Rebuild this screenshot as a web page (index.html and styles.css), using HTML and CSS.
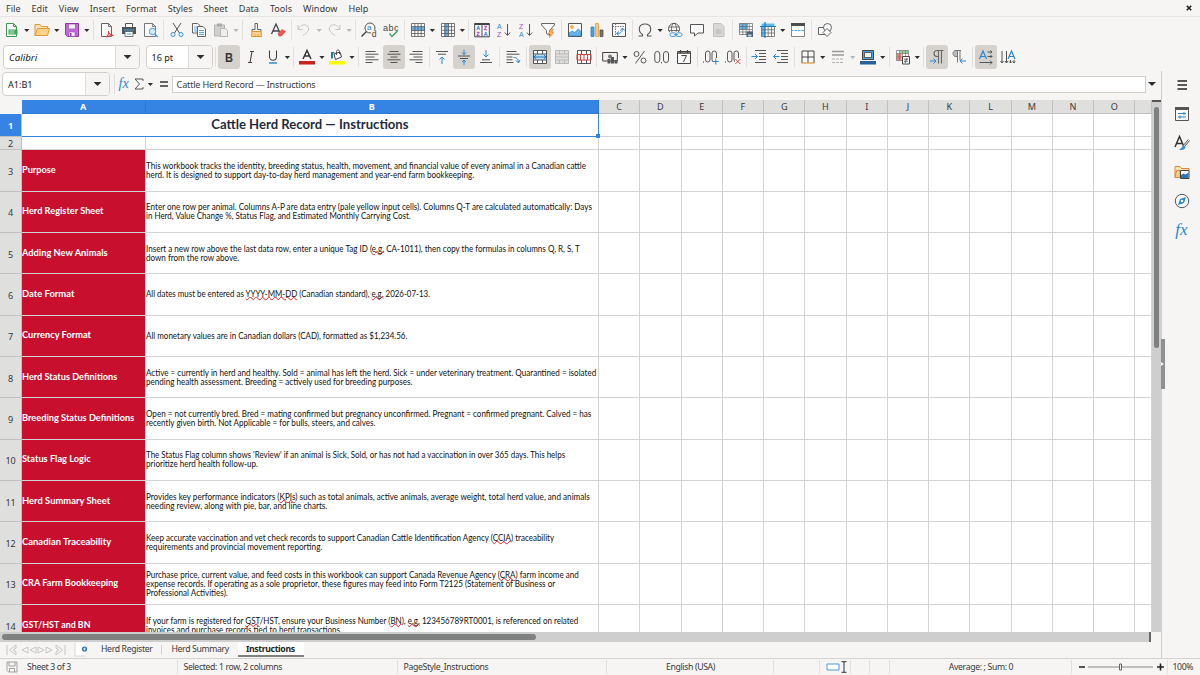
FILE: index.html
```html
<!doctype html>
<html lang="en">
  <head>
    <meta charset="UTF-8">
    <title>Cattle Herd Record</title>
    <link rel="stylesheet" href="styles.css">
  </head>
  <body>
    <header>
      <nav class="menubar">
        <span>File</span><span>Edit</span><span>View</span><span>Insert</span><span>Format</span><span>Styles</span><span>Sheet</span><span>Data</span><span>Tools</span><span>Window</span><span>Help</span>
        <svg class="close" viewBox="0 0 6 6"><path d="M.8.8l4.4 4.4M5.2.8L.8 5.2" stroke="#222" stroke-width="1.6"/></svg>
      </nav>

      <div class="toolbar">
        <b class="btn"><svg viewBox="0 0 16 16"><path d="M2.500 1.500h7l3 3v10h-10z" fill="#fff" stroke="#3a9a50"/><path d="M9.500 1.500v3h3" stroke="#3a9a50"/><path d="M4.500 7.500h9v5h-9z" fill="#3fa556"/><path d="M5.500 9h5M5.500 11h5" stroke="#fff" stroke-width=".7"/></svg></b><i class="arr"></i>
        <b class="btn"><svg viewBox="0 0 16 16"><path d="M1 13.500v-11h5l1.500 2h6v2" fill="#fbe3b5" stroke="#e0953a"/><path d="M1 13.500l2.500-7H15.500l-2 7z" fill="#ffd28a" stroke="#e0953a"/></svg></b><i class="arr"></i>
        <b class="btn"><svg viewBox="0 0 16 16"><path d="M1.500 1.500h13v13h-11l-2-2z" fill="#c16bd6" stroke="#9437ad"/><path d="M4.500 2h7v5h-7z" fill="#f3f0f4" stroke="#9437ad" stroke-width=".6"/><path d="M5 14.500V10h6v4.500z" fill="#fff" stroke="#9437ad" stroke-width=".6"/><path d="M6 11h1.500v3H6z" fill="#9437ad"/></svg></b><i class="arr"></i>
        <i class="sep"></i>
        <b class="btn"><svg viewBox="0 0 16 16"><path d="M2.500 1.500h7l3 3v10h-10z" fill="#fafafa" stroke="#555" stroke-width=".9"/><path d="M9.500 1.500v3h3" stroke="#555" stroke-width=".8"/><path d="M7 15c2-1.500 3-4 2.500-6 0 3 2.500 4 5 4.500-3-.2-5 .3-7.500 1.500z" stroke="#e04040" stroke-width="1.100"/></svg></b>
        <b class="btn"><svg viewBox="0 0 16 16"><path d="M4.500 1.500h7v4h-7z" fill="#fff" stroke="#555"/><path d="M1 5h14v7H1z" fill="#515456"/><path d="M3 7.500h10v1H3z" fill="#4aa3e0"/><path d="M4 9.500h8v5H4z" fill="#fff" stroke="#555" stroke-width=".8"/><path d="M5.500 12h5" stroke="#4aa3e0"/></svg></b>
        <b class="btn"><svg viewBox="0 0 16 16"><path d="M1.500 1.500h8l3 3v10h-11z" fill="#fafafa" stroke="#666" stroke-width=".9"/><path d="M9.500 1.500v3h3" stroke="#666" stroke-width=".8"/><circle cx="9.500" cy="9.500" r="3.200" fill="#d4e9f8" stroke="#4a9bd4"/><path d="M11.800 12l3 3" stroke="#4a9bd4" stroke-width="1.300"/></svg></b>
        <i class="sep"></i>
        <b class="btn"><svg viewBox="0 0 16 16"><path d="M4 1l6.500 10M12 1L5.500 11" stroke="#555"/><circle cx="4" cy="12.500" r="2" stroke="#3a93d6"/><circle cx="12" cy="12.500" r="2" stroke="#3a93d6"/></svg></b>
        <b class="btn"><svg viewBox="0 0 16 16"><path d="M1.500 1.500h5l2.500 2v7.500h-7.500z" fill="#fff" stroke="#555" stroke-width=".9"/><path d="M3 5h4M3 7h4M3 9h4" stroke="#3a93d6" stroke-width=".8"/><path d="M6.500 4.500h5.500l2.500 2.500v7.500h-8z" fill="#fff" stroke="#555" stroke-width=".9"/><path d="M8 8.500h5M8 10.500h5M8 12.500h5" stroke="#3a93d6" stroke-width=".8"/></svg></b>
        <b class="btn"><svg viewBox="0 0 16 16"><path d="M1.500 3h10v11h-10z" fill="#d0d0ce" stroke="#b5b5b3"/><path d="M4 1.500h5v3H4z" fill="#aaa"/><path d="M7.500 6.500h5l2 2v6h-7z" fill="#eee" stroke="#b5b5b3"/></svg></b><i class="arr off"></i>
        <i class="sep"></i>
        <b class="btn"><svg viewBox="0 0 16 16"><path d="M7 1.500h2.500v6H13v2H4v-2h3z" fill="#f5f5f5" stroke="#555" stroke-width=".9"/><path d="M4 9.500h9l.5 5h-10z" fill="#ffd28a" stroke="#e0953a"/><path d="M7 12v2.500M10 12v2.500" stroke="#e0953a" stroke-width=".8"/></svg></b>
        <b class="btn"><svg viewBox="0 0 16 16"><path d="M1.500 12L6 2l4.500 10M3 9h6" stroke="#444" stroke-width="1.300"/><path d="M8 11.500l4-4 3.500 2-4 4.500H9z" fill="#ee5a5a" stroke="#c93b3b" stroke-width=".6"/></svg></b>
        <i class="sep"></i>
        <b class="btn"><svg viewBox="0 0 16 16"><path d="M2 3v4.500h4.500M2.300 7C5 2.500 9 1.500 12 4.500c2 3-.5 6.500-5 9" stroke="#c4c4c2"/></svg></b><i class="arr off"></i>
        <b class="btn"><svg viewBox="0 0 16 16"><path d="M14 3v4.500H9.500M13.700 7C11 2.500 7 1.500 4 4.500c-2 3 .5 6.500 5 9" stroke="#c4c4c2"/></svg></b><i class="arr off"></i>
        <i class="sep"></i>
        <b class="btn"><svg viewBox="0 0 16 16"><circle cx="9" cy="6" r="5" stroke="#555"/><path d="M5.500 9.500l-5 5" stroke="#444" stroke-width="1.500"/><path d="M10 8.500h6v7.500h-6z" fill="#f6f5f4"/><text x="6" y="8.300" font-size="8" fill="#2a87d0">a</text><text x="10.700" y="14.800" font-size="8.500" fill="#444">d</text></svg></b>
        <b class="btn"><svg viewBox="0 0 16 16"><text x="0" y="8.500" font-size="9" fill="#444" textLength="15.500">abc</text><path d="M6.500 11.500l2.500 3 5.500-5.500" stroke="#35a05a" stroke-width="1.300"/></svg></b>
        <i class="sep"></i>
        <b class="btn"><svg viewBox="0 0 16 16"><path d="M1.500 1.500h13v13h-13z" fill="#fff"/><path d="M1 4.500h14v4H1z" fill="#65b5ea"/><path d="M1.500 1.500h13v13h-13zM4.800 1.500v13M8 1.500v13M11.200 1.500v13M1.500 4.700h13M1.500 8.500h13M1.500 11.500h13" stroke="#555" stroke-width=".8"/></svg></b><i class="arr"></i>
        <b class="btn"><svg viewBox="0 0 16 16"><path d="M1.500 1.500h13v13h-13z" fill="#fff"/><path d="M4.500 1h4v14h-4z" fill="#65b5ea"/><path d="M1.500 1.500h13v13h-13zM4.800 1.500v13M8.500 1.500v13M11.500 1.500v13M1.500 4.700h13M1.500 8.200h13M1.500 11.500h13" stroke="#555" stroke-width=".8"/></svg></b><i class="arr"></i>
        <i class="sep"></i>
        <b class="btn"><svg viewBox="0 0 16 16"><path d="M.7 1.500h14.600v13.300H.7zM8 1.500v13.300" fill="#fff" stroke="#444"/><path d="M.7 1h14.600v2H.7z" fill="#444"/><g font-size="5"><text x="2.500" y="7.900" fill="#2a87d0" stroke="#2a87d0" stroke-width=".3">A</text><text x="2.600" y="13.700" fill="#b13fc4" stroke="#b13fc4" stroke-width=".3">Z</text><text x="10" y="7.900" fill="#b13fc4" stroke="#b13fc4" stroke-width=".3">Z</text><text x="9.900" y="13.700" fill="#2a87d0" stroke="#2a87d0" stroke-width=".3">A</text></g></svg></b>
        <b class="btn"><svg viewBox="0 0 16 16"><text x="1" y="6.500" font-size="6.900" fill="#2a87d0">A</text><text x="1" y="14.700" font-size="6.900" fill="#b13fc4">Z</text><path d="M11.500 2v11M8.800 10.500l2.700 3 2.700-3" stroke="#555"/></svg></b>
        <b class="btn"><svg viewBox="0 0 16 16"><text x="1" y="6.500" font-size="6.900" fill="#b13fc4">Z</text><text x="1" y="14.700" font-size="6.900" fill="#2a87d0">A</text><path d="M11.500 2v11M8.800 10.500l2.700 3 2.700-3" stroke="#555"/></svg></b>
        <b class="btn"><svg viewBox="0 0 16 16"><path d="M1.500 1.500h13v1.500L9.500 8.500v5l-3-2v-3L1.500 3z" fill="#fafafa" stroke="#555" stroke-width=".9"/><path d="M11.500 7l-3.500 5h2.500L9.500 15.500l4.500-5.500h-2.500l2-3z" fill="#ffb866" stroke="#dc8020" stroke-width=".6"/></svg></b>
        <i class="sep"></i>
        <b class="btn"><svg viewBox="0 0 16 16"><path d="M1.500 1.500h13v13h-13z" fill="#fafafa" stroke="#555"/><circle cx="5" cy="5" r="1.500" fill="#ffc27a" stroke="#e0953a" stroke-width=".7"/><path d="M2 14v-3l3-2 2.500 1.500L11.500 7l2.500 2.500V14z" fill="#65b5ea" stroke="#1e78ba" stroke-width=".6"/></svg></b>
        <b class="btn"><svg viewBox="0 0 16 16"><path d="M2 5h3v9.500H2z" fill="#4aa3e0" stroke="#1e78ba" stroke-width=".7"/><path d="M6.500 1.500h3v13h-3z" fill="#ffc27a" stroke="#e0953a" stroke-width=".7"/><path d="M11 8h3v6.500h-3z" fill="#777" stroke="#444" stroke-width=".7"/></svg></b>
        <b class="btn"><svg viewBox="0 0 16 16"><path d="M1.500 1.500h13v13h-13z" fill="#fafafa" stroke="#555"/><path d="M1.500 4.500h13M4.500 1.500v13" stroke="#777" stroke-dasharray="1.500 1"/><path d="M6 11.500c4 0 5.500-2 5.500-5M9.500 8.500l2-2.500 2 2.500M8 9.500l-2.500 2 2.500 2" stroke="#2a87d0"/></svg></b>
        <i class="sep"></i>
        <b class="btn"><svg viewBox="0 0 16 16"><path d="M1.500 14h4v-1.500C.8 9.500 1 2 8 2s7.200 7.500 2.500 10.500V14h4" stroke="#555" stroke-width="1.100"/></svg></b><i class="arr"></i>
        <b class="btn"><svg viewBox="0 0 16 16"><circle cx="7" cy="6.800" r="5.500" stroke="#555" stroke-width=".9"/><ellipse cx="7" cy="6.800" rx="2.500" ry="5.500" stroke="#555" stroke-width=".8"/><path d="M1.500 5h11M1.500 8.500h11" stroke="#555" stroke-width=".8"/><path d="M2.500 10h13v5.500h-13z" fill="#f6f5f4"/><rect x="3" y="10.800" width="6" height="3.700" rx="1.800" stroke="#4a9bd4"/><rect x="9" y="10.800" width="6" height="3.700" rx="1.800" stroke="#4a9bd4"/><path d="M7 12.700h4" stroke="#4a9bd4"/></svg></b>
        <b class="btn"><svg viewBox="0 0 16 16"><path d="M1.500 2.500h13v8.500H9l-3.500 3v-3h-4z" fill="#fcfcfc" stroke="#555"/></svg></b>
        <b class="btn"><svg viewBox="0 0 16 16"><path d="M2.500 1.500h7.500l3 3v10H2.500z" fill="#d8d8d6" stroke="#c0c0be"/><path d="M4.500 7h6v5h-6z" fill="#c6c6c4"/></svg></b>
        <i class="sep"></i>
        <b class="btn"><svg viewBox="0 0 16 16"><path d="M1.500 1.500h13v11h-13z" fill="#fff"/><path d="M1.500 1.500h8.500v6H1.500z" fill="#65b5ea"/><path d="M1.500 1.500h13v11h-13zM4.800 1.500v11M8 1.500v11M11.200 1.500v11M1.500 4.500h13M1.500 7.500h13M1.500 10h13" stroke="#666" stroke-width=".7"/><path d="M8.500 9.500h6.500v5.500H8.500z" fill="#515f70"/><path d="M10 12.500h3.500v2H10z" fill="#b9d9f0"/></svg></b>
        <b class="btn"><svg viewBox="0 0 16 16"><path d="M1.500 1.500h13v13h-13z" fill="#fff"/><path d="M1.500 1.500h13v3h-13zM1.500 1.500h3.500v13H1.500z" fill="#65b5ea"/><path d="M1.500 4.500h13v10h-13zM8.200 4.500v10M11.500 4.500v10M1.500 7.700h13M1.500 11h13" stroke="#666" stroke-width=".8"/><path d="M5 0v16M0 4.500h16" stroke="#1e78ba" stroke-width="1.200"/></svg></b><i class="arr"></i>
        <b class="btn"><svg viewBox="0 0 16 16"><path d="M1.500 1.500h13v13h-13z" fill="#fcfcfc" stroke="#777" stroke-width=".9"/><path d="M1 1h14v3H1z" fill="#4d4d4d"/><path d="M1 8.500h14" stroke="#4aa3e0" stroke-dasharray="2.500 1"/></svg></b>
        <i class="sep"></i>
        <b class="btn"><svg viewBox="0 0 16 16"><path d="M1.500 5.500h8v7h-8z" fill="#fafafa" stroke="#555" stroke-width=".9"/><circle cx="10.500" cy="5.500" r="4" fill="#fafafa" stroke="#555" stroke-width=".9"/><path d="M10 6.500l4 4-4 4-4-4z" fill="#fafafa" stroke="#555" stroke-width=".9"/></svg></b>
      </div>

      <div class="toolbar second">
        <div class="combo font-name"><em>Calibri</em><u><i class="arr big"></i></u></div>
        <div class="combo font-size"><span>16 pt</span><u><i class="arr big"></i></u></div>
        <i class="sep"></i>
        <b class="btn on"><svg viewBox="0 0 16 16"><text x="4" y="12.500" font-size="13" font-weight="bold" fill="#333" textLength="8" lengthAdjust="spacingAndGlyphs">B</text></svg></b>
        <b class="btn"><svg viewBox="0 0 16 16"><path d="M7 2.500h4M5 13.500h4M9 2.500L7 13.500" stroke="#444" stroke-width="1.100"/></svg></b>
        <b class="btn"><svg viewBox="0 0 16 16"><path d="M4.500 1.500v6c0 5 7 5 7 0v-6" stroke="#444" stroke-width="1.100"/><path d="M4 14h8" stroke="#2a87d0" stroke-width="1.400"/></svg></b><i class="arr"></i>
        <i class="sep"></i>
        <b class="btn"><svg viewBox="0 0 16 16"><path d="M4 10l4-8.500L12 10M5.300 7h5.400" stroke="#333" stroke-width="1.500"/><path d="M0 12h16v3.500H0z" fill="#c9211e"/></svg></b><i class="arr"></i>
        <b class="btn"><svg viewBox="0 0 16 16"><path d="M5 5l6-2 1.500 5-6 2.500z" fill="#fff" stroke="#444"/><path d="M7.500 6V2.500c0-2 3-2 3 0V5" stroke="#444" stroke-width=".9"/><path d="M2 9.500V3h4L4 5v4.500z" fill="#2a77b8"/><path d="M0 12h16v3.500H0z" fill="#ff0"/></svg></b><i class="arr"></i>
        <i class="sep"></i>
        <b class="btn"><svg viewBox="0 0 16 16"><path d="M1.500 2.500h10M1.500 5.200h13M1.500 8h9M1.500 10.800h13M1.500 13.500h7" stroke="#555"/></svg></b>
        <b class="btn on"><svg viewBox="0 0 16 16"><path d="M3.500 2.500h9M1.500 5.200h13M4.500 8h7M1.500 10.800h13M4.500 13.500h7" stroke="#555"/></svg></b>
        <b class="btn"><svg viewBox="0 0 16 16"><path d="M4.500 2.500h10M1.500 5.200h13M5.500 8h9M1.500 10.800h13M7.500 13.500h7" stroke="#555"/></svg></b>
        <i class="sep"></i>
        <b class="btn"><svg viewBox="0 0 16 16"><path d="M2 2.500h12M4 5.200h8" stroke="#555"/><path d="M8 15V8M5.500 10.500L8 8l2.500 2.500" stroke="#2a87d0"/></svg></b>
        <b class="btn on"><svg viewBox="0 0 16 16"><path d="M2 7h12M4 9.500h8" stroke="#555"/><path d="M8 .5v5M6 3.500l2 2 2-2M8 16v-5M6 13l2-2 2 2" stroke="#2a87d0"/></svg></b>
        <b class="btn"><svg viewBox="0 0 16 16"><path d="M4 10.800h8M2 13.500h12" stroke="#555"/><path d="M8 1v7M5.500 5.500L8 8l2.500-2.500" stroke="#2a87d0"/></svg></b>
        <i class="sep"></i>
        <b class="btn"><svg viewBox="0 0 16 16"><path d="M1.500 2.500h10M1.500 5.200h13M1.500 8h6M1.500 10.800h6M1.500 13.500h7" stroke="#555"/><path d="M8.500 8.500c3 0 4.500 1 5 4.500M11 11.500l2.500 2.500 1.500-3" stroke="#2a87d0"/></svg></b>
        <i class="sep"></i>
        <b class="btn on"><svg viewBox="0 0 16 16"><path d="M1.500 1.500h13v13h-13z" fill="#fff"/><path d="M1.500 5h13v6h-13z" fill="#b9dcf4"/><path d="M1.500 1.500h13v13h-13zM5.500 1.500V5M10.500 1.500V5M5.500 11v3.500M10.500 11v3.500M1.500 5h13M1.500 11h13" stroke="#444" stroke-width=".9"/><path d="M2 8h12M4 6.200L2 8l2 1.800M12 6.200L14 8l-2 1.800" stroke="#1e78ba"/></svg></b>
        <b class="btn"><svg viewBox="0 0 16 16"><path d="M1.500 1.500h13v13h-13zM5.500 1.500V5M10.500 1.500V5M5.500 11v3.500M10.500 11v3.500M1.500 5h13M1.500 11h13M1.500 8h13" fill="#dededc" stroke="#b5b5b3" stroke-width=".9"/></svg></b>
        <b class="btn"><svg viewBox="0 0 16 16"><path d="M1.500 1.500h13v13h-13zM5.500 1.500V5M10.500 1.500V5M5.500 11v3.500M10.500 11v3.500" fill="#fff" stroke="#444" stroke-width=".9"/><path d="M1 5.500h14v5.500H1zM4.500 5.500V11M8 5.500V11M11.500 5.500V11" stroke="#d83a3a"/></svg></b>
        <i class="sep"></i>
        <b class="btn"><svg viewBox="0 0 16 16"><path d="M.7 3.500h14.600v8.500H.7z" fill="#f2f2f2" stroke="#444"/><circle cx="8" cy="7.500" r="2" fill="#777"/><path d="M5.500 10h3v4.500h-3zM9 8h3v6.500H9zM12.500 11h3v3.500h-3z" fill="#555"/></svg></b><i class="arr"></i>
        <b class="btn"><svg viewBox="0 0 16 16"><circle cx="4.500" cy="5" r="2.500" stroke="#555"/><circle cx="11.500" cy="11.500" r="2.500" stroke="#555"/><path d="M12.500 2l-9 12.500" stroke="#555"/></svg></b>
        <b class="btn"><svg viewBox="0 0 16 16"><rect x=".8" y="2.500" width="5" height="11" rx="2.500" stroke="#555"/><path d="M7.500 13v1.300" stroke="#555"/><rect x="9.500" y="2.500" width="5" height="11" rx="2.500" stroke="#555"/></svg></b>
        <b class="btn"><svg viewBox="0 0 16 16"><path d="M1.500 2.500h13v12h-13z" fill="#fafafa" stroke="#444"/><path d="M1.500 4h13M4.500 1v3M11.500 1v3" stroke="#444" stroke-width="1.300"/><path d="M5.500 6.500h5l-3 6.500" stroke="#444"/></svg></b>
        <i class="sep"></i>
        <b class="btn"><svg viewBox="0 0 16 16"><rect x="2.500" y="2" width="4.500" height="11" rx="2.200" stroke="#555"/><rect x="9" y="2" width="4.500" height="11" rx="2.200" stroke="#555"/><path d="M.5 12.500v1.200" stroke="#555"/><path d="M10 9h6v7h-6z" fill="#f6f5f4"/><path d="M12.800 9.500v6M9.800 12.500h6" stroke="#2a87d0"/></svg></b>
        <b class="btn"><svg viewBox="0 0 16 16"><rect x="2.500" y="2" width="4.500" height="11" rx="2.200" stroke="#555"/><rect x="9" y="2" width="4.500" height="11" rx="2.200" stroke="#555"/><path d="M.5 12.500v1.200" stroke="#555"/><path d="M10 9h6v7h-6z" fill="#f6f5f4"/><path d="M10.300 10l5 5M15.300 10l-5 5" stroke="#e04040"/></svg></b>
        <i class="sep"></i>
        <b class="btn"><svg viewBox="0 0 16 16"><path d="M4 1.500h11M8 4.500h7M8 7.500h7M8 10.500h7M4 13.500h11" stroke="#555"/><path d="M.5 7.500h6M4 5l2.500 2.500L4 10" stroke="#2a87d0"/></svg></b>
        <b class="btn"><svg viewBox="0 0 16 16"><path d="M4 1.500h11M8 4.500h7M8 7.500h7M8 10.500h7M4 13.500h11" stroke="#555"/><path d="M.5 7.500h6M3 5L.5 7.500 3 10" stroke="#2a87d0"/></svg></b>
        <i class="sep"></i>
        <b class="btn"><svg viewBox="0 0 16 16"><path d="M2 2h12v12H2z" fill="#fafafa"/><path d="M2 14V2h12v12M8 2v12M2 8h12" stroke="#444"/><path d="M1.500 14h13" stroke="#e0953a" stroke-width="1.200"/></svg></b><i class="arr"></i>
        <b class="btn"><svg viewBox="0 0 16 16"><path d="M2 2.500h12M2 6h12" stroke="#999" stroke-width="1.600"/><path d="M2 10h12M2 13.500h12" stroke="#b0b0ae" stroke-dasharray="3 1"/></svg></b><i class="arr off"></i>
        <b class="btn"><svg viewBox="0 0 16 16"><path d="M2.500 1.500h11v9h-11z" fill="#4aa3e0" stroke="#444"/><path d="M4.500 3.500h7v5h-7z" fill="#f6f5f4" stroke="#444" stroke-width=".8"/><path d="M0 12h16v3.500H0z" fill="#2a6099"/></svg></b><i class="arr"></i>
        <i class="sep"></i>
        <b class="btn"><svg viewBox="0 0 16 16"><path d="M1.500 1.500h12v10h-12z" fill="#fff"/><path d="M4.500 1.500h9v3h-9z" fill="#8ed494"/><path d="M1.500 4.500h5v7h-5z" fill="#f0837e"/><path d="M1.500 1.500h12v10h-12zM4.500 1.500v10M7.500 1.500v10M10.500 1.500v10M1.500 4.500h12M1.500 8h12" stroke="#777" stroke-width=".7"/><path d="M7.500 7.500h7v7.500h-7z" fill="#fff" stroke="#444"/><path d="M9 10.200h4M9 12.300h4M12 9l-2 5" stroke="#444" stroke-width=".8"/></svg></b><i class="arr"></i>
        <i class="sep"></i>
        <b class="btn on"><svg viewBox="0 0 16 16"><path d="M14.500 1.500H8c-4 0-4 6 0 6h1M9.500 1.500v13M12.500 1.500v13" stroke="#666" stroke-width="1.100"/><path d="M1 12h6M4.500 9.500L7 12l-2.500 2.500" stroke="#2a87d0"/></svg></b>
        <b class="btn"><svg viewBox="0 0 16 16"><path d="M7 1.500H5c-4 0-4 6 0 6h2z" fill="#bbb"/><path d="M10 1.500H5c-4 0-4 6 0 6h1M6.500 1.500v12M9 1.500v10" stroke="#777"/><path d="M9 12h6M11.500 9.500L9 12l2.500 2.500" stroke="#2a87d0"/></svg></b>
        <i class="sep"></i>
        <b class="btn on"><svg viewBox="0 0 16 16"><path d="M1.500 10L5 2l3.500 8M2.700 7.500h4.600" stroke="#2a87d0" stroke-width="1.200"/><path d="M9.500 3h4.500M12.500 1.500L14 3l-1.500 1.500M9.500 7.500h4.500M12.500 6L14 7.500 12.500 9M1.500 13.500h12.500M12 11.500l2 2-2 2" stroke="#555"/></svg></b>
        <b class="btn"><svg viewBox="0 0 16 16"><path d="M8 10l3.500-8 3.500 8M9.200 7.500h4.600" stroke="#2a87d0" stroke-width="1.200"/><path d="M2 2v12M.5 12L2 14l1.500-2M6.500 2v12M5 12l1.500 2L8 12M10.500 11v3M9.200 12.500l1.300 1.500 1.300-1.500M14 11v3M12.700 12.500L14 14l1.300-1.500" stroke="#555"/></svg></b>
      </div>
    </header>

    <div class="workspace">
      <main>
        <div class="formulabar">
          <div class="combo name-box"><span>A1:B1</span><u><i class="arr big"></i></u></div>
          <i class="sep"></i>
          <span class="fx">fx</span>
          <svg class="sigma" viewBox="0 0 10 12"><path d="M9 3V1H1l4.500 5L1 11h8V9" stroke="#555"/></svg>
          <i class="arr"></i>
          <svg class="equals" viewBox="0 0 8 6"><path d="M0 1h8M0 5h8" stroke="#333" stroke-width="1.400"/></svg>
          <div class="input">Cattle Herd Record — Instructions</div>
          <i class="arr big"></i>
        </div>
        <div class="viewport">
          <div class="sheet" id="sheet"></div>
          <div class="vscroll"><i></i></div>
        </div>
        <div class="hscroll"><i></i></div>
        <div class="tabs">
          <svg class="nav-arrows" viewBox="0 0 60 12"><path d="M1 1v10M10 1L3.500 6l6.500 5V8L7 6l3-2zM22 3l-6 3 6 3zM30 3l-6 3 6 3zM32 3l6 3-6 3zM40 3l6 3-6 3zM50 1l6.500 5-6.500 5V8l3-2-3-2zM59 1v10" stroke="#c6c6c4"/></svg>
          <svg class="add-sheet" viewBox="0 0 14 14"><path d="M1 0h10v13H1z" fill="#fff"/><path d="M1 0v13h10" stroke="#c8c8c6" stroke-width=".7"/><circle cx="10.500" cy="6" r="2.600" fill="#2a6fc0"/><path d="M10.500 4.600v2.800M9.100 6h2.800" stroke="#fff" stroke-width=".8"/></svg>
          <span class="tab">Herd Register</span>
          <span class="tab">Herd Summary</span>
          <span class="tab active">Instructions</span>
        </div>
      </main>
      <aside>
        <svg viewBox="0 0 16 16"><path d="M3.500 4h9.500M3.500 8h9.500M3.500 12h9.500" stroke="#222" stroke-width="1.500"/></svg>
        <svg viewBox="0 0 16 16"><path d="M1.500 1.500h13v13h-13z" fill="#fafafa" stroke="#555"/><path d="M1 1h14v3H1z" fill="#555"/><path d="M4 7.500h8M10 6v3M4 11h8M6 9.500v3" stroke="#2a87d0"/></svg>
        <svg viewBox="0 0 16 16"><path d="M1 12L5.500 1.500 10 12M2.500 8.500h6" stroke="#333" stroke-width="1.500"/><path d="M15 5l-5.500 6.500" stroke="#666" stroke-width="2.600"/><path d="M15 5l-5.500 6.500" stroke="#eee" stroke-width="1"/><path d="M10 10.500c-2 0-2 3-5 4 3 1.500 6.500 0 6.500-2.500z" fill="#3a93d6"/></svg>
        <svg viewBox="0 0 16 16"><path d="M1 13.500v-11h5l1.500 2H15v2" fill="#fbe3b5" stroke="#e0853a"/><path d="M1 13.500l1.500-7H6v7z" fill="#ffd28a" stroke="#e0853a"/><path d="M6.500 6.500h8.500v8H6.500z" fill="#fff" stroke="#444"/><path d="M7 14v-3l2.500-1.500 2 1 3-2V14z" fill="#2a77b8"/></svg>
        <svg viewBox="0 0 16 16"><circle cx="8" cy="8" r="6.700" fill="#fafafa" stroke="#555"/><path d="M12 4l-2 6-6 2 2-6z" fill="#2a87d0"/><circle cx="8" cy="8" r="1.300" fill="#fff"/></svg>
        <span class="fx">fx</span>
        <i class="grip"></i>
      </aside>
    </div>

    <footer>
      <span><svg class="disk" viewBox="0 0 12 12"><path d="M1 1h10v10H2.500L1 9.500zM3 1v4h6V1M3.500 11V7.500h5V11" stroke="#999" stroke-width=".9"/></svg>Sheet 3 of 3</span>
      <span>Selected: 1 row, 2 columns</span>
      <span>PageStyle_Instructions</span>
      <span class="center">English (USA)</span>
      <span></span>
      <span class="modes"><svg viewBox="0 0 20 12"><path d="M1 3h12v6H1z" fill="#fff" stroke="#4a9bd4"/><path d="M15.500 .7h5M15.500 11.300h5M18 .7v10.600" stroke="#333"/></svg></span>
      <span></span>
      <span></span>
      <span class="center">Average: ; Sum: 0</span>
      <span class="zoom"><svg viewBox="0 0 88 10"><path d="M1 5h6M79 5h7M82.500 1.500v7" stroke="#222" stroke-width="1.600"/><path d="M10 5h65" stroke="#888"/><path d="M41.500 2h2v6h-2z" fill="#eee" stroke="#555" stroke-width=".9"/></svg></span>
      <span>100%</span>
    </footer>

    <script>
      // label, label width, then [text, width] for each wrapped line; *word* is flagged by the spell checker
      const rows = [
        ["Purpose", 33.5, [["This workbook tracks the identity, breeding status, health, movement, and financial value of every animal in a Canadian cattle", 440.5], ["herd. It is designed to support day-to-day herd management and year-end farm bookkeeping.", 328.5]]],
        ["Herd Register Sheet", 81.5, [["Enter one row per animal. Columns A-P are data entry (pale yellow input cells). Columns Q-T are calculated automatically: Days", 445.5], ["in Herd, Value Change %, Status Flag, and Estimated Monthly Carrying Cost.", 264.5]]],
        ["Adding New Animals", 86, [["Insert a new row above the last data row, enter a unique Tag ID (*e.g.* CA-1011), then copy the formulas in columns Q, R, S, T", 433.5], ["down from the row above.", 93.5]]],
        ["Date Format", 52, [["All dates must be entered as *YYYY-MM-DD* (Canadian standard), *e.g.* 2026-07-13.", 284]]],
        ["Currency Format", 69.5, [["All monetary values are in Canadian dollars (CAD), formatted as $1,234.56.", 261]]],
        ["Herd Status Definitions", 95.5, [["Active = currently in herd and healthy. Sold = animal has left the herd. Sick = under veterinary treatment. Quarantined = isolated", 450], ["pending health assessment. Breeding = actively used for breeding purposes.", 266]]],
        ["Breeding Status Definitions", 112.5, [["Open = not currently bred. Bred = mating confirmed but pregnancy unconfirmed. Pregnant = confirmed pregnant. Calved = has", 445.5], ["recently given birth. Not Applicable = for bulls, steers, and calves.", 229.5]]],
        ["Status Flag Logic", 68.5, [["The Status Flag column shows 'Review' if an animal is Sick, Sold, or has not had a vaccination in over 365 days. This helps", 419], ["prioritize herd health follow-up.", 112]]],
        ["Herd Summary Sheet", 88, [["Provides key performance indicators (*KPIs*) such as total animals, active animals, average weight, total herd value, and animals", 443.5], ["needing review, along with pie, bar, and line charts.", 181]]],
        ["Canadian Traceability", 89.5, [["Keep accurate vaccination and vet check records to support Canadian Cattle Identification Agency (*CCIA*) traceability", 408], ["requirements and provincial movement reporting.", 176.5]]],
        ["CRA Farm Bookkeeping", 96.5, [["Purchase price, current value, and feed costs in this workbook can support Canada Revenue Agency (*CRA*) farm income and", 433], ["expense records. If operating as a sole proprietor, these figures may feed into Form T2125 (Statement of Business or", 409], ["Professional Activities).", 82]]],
        ["GST/HST and BN", 68.5, [["If your farm is registered for *GST*/HST, ensure your Business Number (*BN*), *e.g.* 123456789RT0001, is referenced on related", 432], ["invoices and purchase records tied to herd transactions.", 196]]],
      ]

      const fit = (text, width) => `<span class="fit" data-width="${width}">${text.replace(/\*(.+?)\*/g, "<mark>$1</mark>")}</span>`
      const empty = "<div></div>".repeat(14)

      let html = '<div class="row head"><div></div><div class="sel">A</div><div class="sel">B</div>'
      html += [..."CDEFGHIJKLMNO"].map((c) => `<div>${c}</div>`).join("") + "<div></div></div>"
      html += `<div class="row first"><div class="num sel">1</div><div class="title">${fit("Cattle Herd Record — Instructions", 197.5)}</div>${empty}</div>`
      html += `<div class="row blank"><div class="num">2</div><div></div><div></div>${empty}</div>`
      rows.forEach(([label, width, lines], i) => {
        html += `<div class="row"><div class="num">${i + 3}</div><div class="label">${fit(label, width)}</div><div class="text">`
        html += lines.map(([text, w]) => fit(text, w)).join("") + `</div>${empty}</div>`
      })
      document.getElementById("sheet").innerHTML = html

      document.querySelectorAll(".fit").forEach((el) => {
        el.style.transform = `scaleX(${el.dataset.width / el.offsetWidth})`
      })
    </script>
  </body>
</html>
```
FILE: styles.css
```css
* {
    box-sizing: border-box;
}

body {
    margin: 0;
    width: 1200px;
    height: 675px;
    overflow: hidden;
    display: flex;
    flex-direction: column;
    background: #f6f5f4;
    color: #3a3a3a;
    font-family: "Noto Sans", sans-serif;
    font-size: 9.1px;
}

svg {
    fill: none;
    flex: none;
    display: block;
}

.menubar {
    display: flex;
    align-items: center;
    gap: 11px;
    height: 17px;
    padding: 0 8px 0 6px;
    border-bottom: 1px solid #e6e5e3;
}

.close {
    width: 6px;
    height: 6px;
    margin-left: auto;
}

.toolbar {
    display: flex;
    align-items: center;
    height: 26px;
    padding-left: 1px;
}

.toolbar.second {
    height: 28px;
    padding-left: 3px;
}

.btn {
    display: flex;
    flex: none;
    align-items: center;
    justify-content: center;
    width: 22px;
    height: 24px;
    border-radius: 3px;
    font-family: "Liberation Sans", sans-serif;
    font-weight: normal;
}

.btn svg {
    width: 16px;
    height: 16px;
}

.btn.on {
    background: #d5d1cd;
}

.arr {
    flex: none;
    width: 8px;
    height: 3px;
    margin-top: 1px;
    background: #2e2e2e;
    clip-path: polygon(15% 0, 80% 0, 47% 100%);
}

.arr.off {
    background: #b8b8b6;
}

.arr.big {
    height: 4px;
    margin-top: 0;
    clip-path: polygon(0 0, 100% 0, 50% 100%);
}

.sep {
    flex: none;
    width: 4.6px;
    height: 20px;
    background: linear-gradient(#e0dfdd, #e0dfdd) center / 1px 100% no-repeat;
}

.combo {
    display: flex;
    flex: none;
    height: 24px;
    border: 1px solid #d3cfcb;
    border-radius: 4px;
    background: #fff;
    color: #222;
    align-items: center;
    padding-left: 5px;
    overflow: hidden;
}

.combo u {
    display: flex;
    align-items: center;
    justify-content: center;
    width: 24px;
    height: 100%;
    margin-left: auto;
    border-left: 1px solid #dedbd8;
    background: #f6f5f4;
}

.font-name {
    width: 137px;
    margin-right: 5.5px;
    font-size: 9.7px;
}

.font-size {
    width: 67.5px;
}

.workspace {
    display: flex;
    height: 587px;
}

main {
    width: 1162px;
    border-right: 1px solid #cfcecc;
}

.formulabar {
    display: flex;
    align-items: center;
    height: 29px;
    padding: 0 5px 3px 2px;
}

.name-box {
    width: 108px;
    margin-right: 2px;
}

.fx {
    color: #2a87d0;
    font: italic 15px "Liberation Serif", serif;
}

.formulabar .fx {
    width: 12px;
    margin-left: 2px;
    font-size: 14px;
}

.sigma {
    width: 10px;
    height: 12px;
    margin: 0 3px 0 3px;
}

.equals {
    width: 8px;
    height: 6px;
    margin: 0 4px 0 5px;
}

.input {
    flex: 1;
    height: 17px;
    margin-right: 2px;
    padding-left: 4px;
    border: 1px solid #d3cfcb;
    background: #fff;
    line-height: 15px;
    letter-spacing: -0.2px;
}

.viewport {
    display: flex;
    height: 532px;
}

.sheet {
    width: 1152px;
    overflow: hidden;
    background: #fff;
    font-family: Lato, sans-serif;
}

.row {
    display: grid;
    grid-template-columns: 22px 123.5px 453.5px repeat(13, 41.27px) 1fr;
    grid-template-rows: 100%;
    height: 41.35px;
}

.row > div {
    border-right: 1px solid #d3d3d3;
    border-bottom: 1px solid #d3d3d3;
}

.head {
    height: 14px;
}

.head > div {
    background: #dfdfde;
    border-color: #c0c0c0;
    text-align: center;
    line-height: 14px;
    font-family: "Noto Sans", sans-serif;
}

.row > .sel {
    background: #3584e4;
    border-color: #2f78d2;
    color: #fff;
    font-weight: bold;
}

.head > div:first-child {
    background: #f6f5f4;
    border-color: #f6f5f4;
}

.row > .num {
    display: flex;
    align-items: center;
    justify-content: center;
    padding-top: 2px;
    font-family: "Noto Sans", sans-serif;
    line-height: 11px;
    letter-spacing: -0.2px;
    border-color: #c0c0c0;
}

.row > .num:not(.sel) {
    background: #dfdfde;
}

.first {
    height: 22.6px;
}

.row > .title {
    position: relative;
    grid-column: span 2;
    display: flex;
    align-items: center;
    justify-content: center;
    padding-bottom: 2px;
    border-right: 1px solid #3584e4;
    border-bottom: 1px solid #3584e4;
    color: #1f2a3d;
    font-size: 13px;
    font-weight: bold;
    line-height: 18px;
}

/* fill handle of the selection */
.title::after {
    content: "";
    position: absolute;
    right: -2px;
    bottom: -2px;
    width: 4px;
    height: 4px;
    background: #3584e4;
}

.blank {
    height: 13.7px;
}

.row > .label {
    display: flex;
    align-items: center;
    padding-bottom: 2px;
    background: #c8102e;
    color: #fff;
    font-size: 9.6px;
    font-weight: bold;
}

.row > .text {
    display: flex;
    flex-direction: column;
    align-items: flex-start;
    justify-content: center;
    padding: 0 0 1px 0.7px;
    color: #111;
    font-size: 8.9px;
    line-height: 9px;
}

.fit {
    display: inline-block;
    white-space: nowrap;
    transform-origin: left center;
}

.title .fit {
    transform-origin: center;
}

mark {
    background: none;
    color: inherit;
    text-decoration: underline wavy #e02020 0.6px;
    text-underline-offset: -0.5px;
    text-decoration-skip-ink: none;
}

.vscroll {
    width: 9px;
    padding: 5px 2px 0;
    background: #cecece;
    border-top: 2px solid #555;
}

.vscroll i {
    display: block;
    height: 241px;
    border-radius: 3px;
    background: #7f8180;
}

.hscroll {
    width: 1151px;
    height: 9.5px;
    padding: 2px;
    background: #cecece;
    border-right: 2px solid #666;
}

.hscroll i {
    display: block;
    width: 534px;
    height: 5.5px;
    border-radius: 3px;
    background: #7f8180;
}

.tabs {
    display: flex;
    align-items: center;
    height: 16px;
    padding-left: 6px;
    font-size: 8.7px;
    letter-spacing: -0.35px;
}

.nav-arrows {
    width: 60px;
    height: 12px;
}

.add-sheet {
    width: 14px;
    height: 14px;
    margin: 0 5px 0 8px;
}

.tab {
    height: 15px;
    padding: 0 9px 0 8px;
    line-height: 15px;
}

.tab + .tab {
    background: linear-gradient(#d0d0ce, #d0d0ce) left center / 1px 9px no-repeat;
    padding-left: 10px;
}

.tab + .tab.active {
    border-bottom: 2px solid #7f8180;
    background: #fff;
    font-weight: bold;
    padding-left: 8px;
    color: #222;
}

aside {
    position: relative;
    display: flex;
    flex-direction: column;
    align-items: center;
    gap: 13px;
    width: 38px;
    padding: 6px 0 0 1px;
}

aside svg {
    width: 16px;
    height: 16px;
}

aside .fx {
    font-size: 17px;
    line-height: 16px;
}

.grip {
    position: absolute;
    left: -1px;
    top: 268px;
    width: 4px;
    height: 50px;
    background: #8f9190;
}

.grip::after {
    content: "";
    display: block;
    width: 3px;
    height: 4px;
    margin-top: 23px;
    background: #fff;
    clip-path: polygon(0 0, 100% 50%, 0 100%);
}

footer {
    display: grid;
    grid-template-columns: 177.5px 220px 209px 167px 46px 31px 19px 20px 182px 96px 32px;
    align-items: center;
    height: 17px;
    border-top: 1px solid #d5d3d1;
    font-size: 8.7px;
    letter-spacing: -0.35px;
}

footer span {
    display: flex;
    align-items: center;
    height: 14px;
    padding-left: 6px;
    border-right: 1px solid #e2e0de;
    white-space: nowrap;
}

footer span:last-child {
    padding-left: 5px;
    border: 0;
}

footer .center {
    justify-content: center;
    padding-left: 2px;
}

.disk {
    width: 12px;
    height: 12px;
    margin-right: 9px;
}

.modes svg {
    width: 20px;
    height: 12px;
    overflow: visible;
}

.zoom svg {
    width: 88px;
    height: 10px;
}
```
